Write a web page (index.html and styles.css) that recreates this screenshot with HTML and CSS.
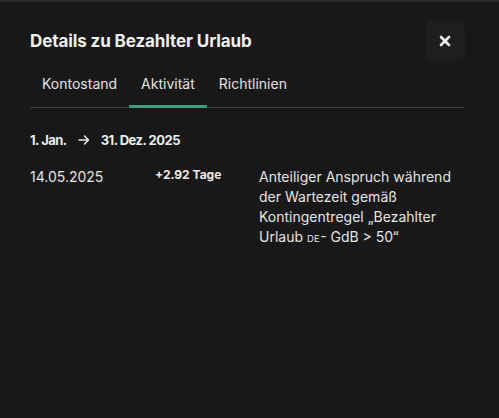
FILE: index.html
```html
<!DOCTYPE html>
<html lang="de">
<head>
<meta charset="utf-8">
<link rel="stylesheet" href="styles.css">
</head>
<body>
<div class="dialog">
  <header class="head">
    <h1 class="title">Details zu Bezahlter Urlaub</h1>
    <button class="close" aria-label="Schließen">
      <svg width="12" height="12" viewBox="0 0 12 12"><path d="M2 2L10 10M10 2L2 10" stroke="#f2f2f2" stroke-width="2.6" stroke-linecap="round"/></svg>
    </button>
  </header>
  <nav class="tabs">
    <span class="tab">Kontostand</span>
    <span class="tab active">Aktivität</span>
    <span class="tab">Richtlinien</span>
  </nav>
  <div class="range">
    <span>1. Jan.</span>
    <svg class="arrow" width="12" height="10" viewBox="0 0 12 10"><path d="M1 5H10.5M6.5 1L10.5 5L6.5 9" fill="none" stroke="#e6e6e6" stroke-width="1.6" stroke-linecap="round" stroke-linejoin="round"/></svg>
    <span>31. Dez. 2025</span>
  </div>
  <div class="row">
    <div class="date">14.05.2025</div>
    <div class="amount">+2.92 Tage</div>
    <div class="desc">Anteiliger Anspruch während der Wartezeit gemäß Kontingentregel „Bezahlter Urlaub <span class="sc">DE</span>- GdB &gt; 50“</div>
  </div>
</div>
</body>
</html>
```
FILE: styles.css
```css
* { box-sizing: border-box; }
html, body { margin: 0; height: 100%; }
body {
  background: #181818;
  border-top: 2px solid #2c2c2c;
  font-family: Inter, "Noto Sans", sans-serif;
  color: #e6e6e6;
}
.dialog { padding: 19px 34px 0 30px; }
.head {
  display: flex;
  align-items: center;
  justify-content: space-between;
}
.title {
  margin: 0;
  font-size: 17px;
  font-weight: 700;
  letter-spacing: -0.1px;
  color: #f0f0f0;
}
.close {
  width: 40px;
  height: 40px;
  border: 0;
  border-radius: 7px;
  background: #1e1e1e;
  display: flex;
  align-items: center;
  justify-content: center;
  padding: 0;
}
.tabs {
  display: flex;
  margin-top: 2px;
  border-bottom: 1px solid #3a3a3a;
}
.tab {
  padding: 11px 12px 12px;
  font-size: 14px;
  color: #e2e2e2;
  line-height: 20px;
  border-bottom: 2px solid transparent;
  margin-bottom: -1px;
}
.tab.active { border-bottom: 3px solid #3e9c82; padding-bottom: 11px; }
.range {
  display: flex;
  align-items: center;
  gap: 11px;
  margin-top: 24px;
  font-size: 13px;
  font-weight: 700;
  letter-spacing: -0.5px;
  color: #ececec;
}
.row {
  display: grid;
  grid-template-columns: 125px 104px 206px;
  margin-top: 19px;
  font-size: 14px;
  line-height: 20px;
  color: #e4e4e4;
}
.amount { font-size: 12px; font-weight: 700; line-height: 16px; color: #ececec; }
.sc { font-size: 9.5px; letter-spacing: 0.3px; }
```
